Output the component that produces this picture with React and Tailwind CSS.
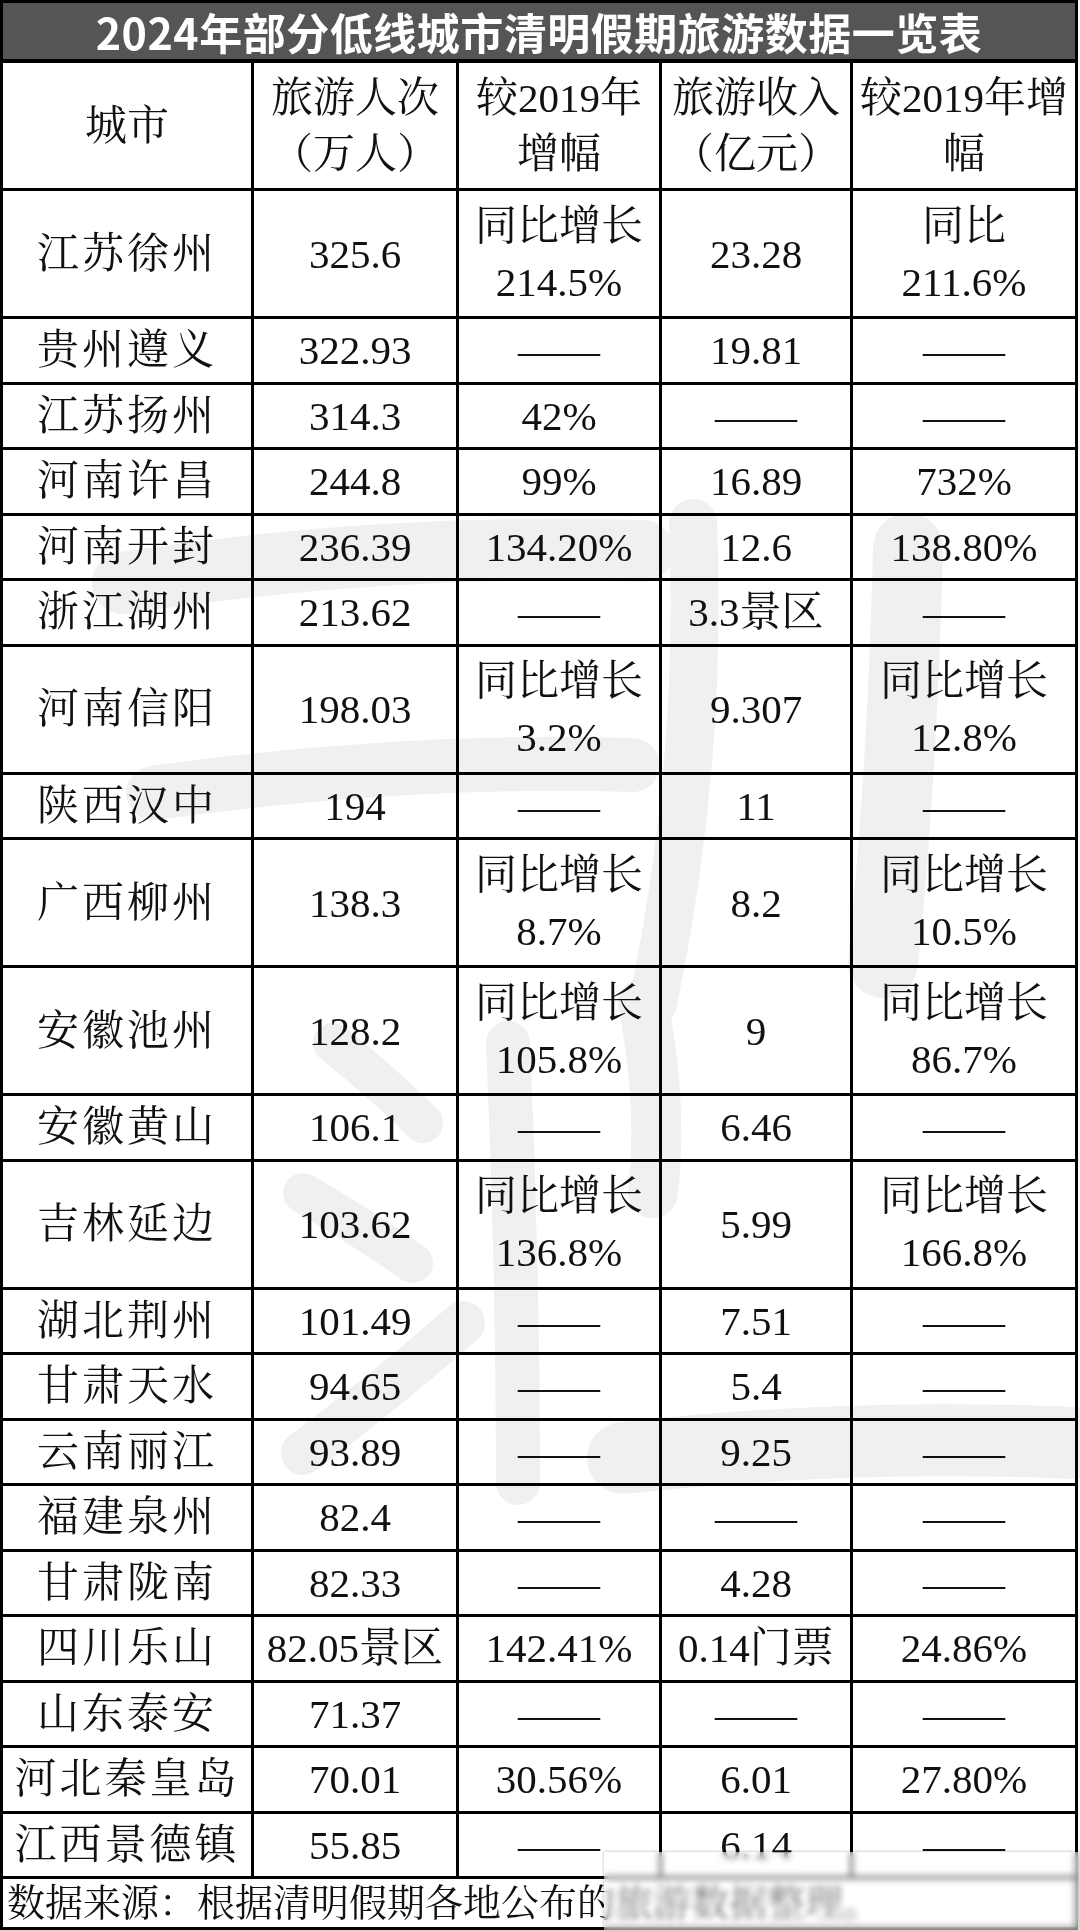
import React from "react";

const rows = [
  ["江苏徐州", "325.6", "同比增长\n214.5%", "23.28", "同比\n211.6%", true],
  ["贵州遵义", "322.93", "——", "19.81", "——"],
  ["江苏扬州", "314.3", "42%", "——", "——"],
  ["河南许昌", "244.8", "99%", "16.89", "732%"],
  ["河南开封", "236.39", "134.20%", "12.6", "138.80%"],
  ["浙江湖州", "213.62", "——", "3.3景区", "——"],
  ["河南信阳", "198.03", "同比增长\n3.2%", "9.307", "同比增长\n12.8%", true],
  ["陕西汉中", "194", "——", "11", "——"],
  ["广西柳州", "138.3", "同比增长\n8.7%", "8.2", "同比增长\n10.5%", true],
  ["安徽池州", "128.2", "同比增长\n105.8%", "9", "同比增长\n86.7%", true],
  ["安徽黄山", "106.1", "——", "6.46", "——"],
  ["吉林延边", "103.62", "同比增长\n136.8%", "5.99", "同比增长\n166.8%", true],
  ["湖北荆州", "101.49", "——", "7.51", "——"],
  ["甘肃天水", "94.65", "——", "5.4", "——"],
  ["云南丽江", "93.89", "——", "9.25", "——"],
  ["福建泉州", "82.4", "——", "——", "——"],
  ["甘肃陇南", "82.33", "——", "4.28", "——"],
  ["四川乐山", "82.05景区", "142.41%", "0.14门票", "24.86%"],
  ["山东泰安", "71.37", "——", "——", "——"],
  ["河北秦皇岛", "70.01", "30.56%", "6.01", "27.80%"],
  ["江西景德镇", "55.85", "——", "6.14", "——"],
];

// split a line into runs: CJK runs get a slightly larger size
function Runs({ text, city }) {
  const parts = text.match(/[\u3000-\u9fff\uff00-\uffef]+|[^\u3000-\u9fff\uff00-\uffef]+/g) || [];
  return parts.map((p, i) =>
    /[\u3000-\u9fff\uff00-\uffef]/.test(p) ? (
      <span
        key={i}
        className={city ? "text-[42px] tracking-[3px]" : "text-[42px]"}
      >
        {p}
      </span>
    ) : (
      <span key={i} className="text-[41px]">
        {p}
      </span>
    )
  );
}

function Cell({ text, last, city }) {
  const lines = text.split("\n");
  return (
    <div
      className={
        last
          ? "flex flex-col items-center justify-center text-center leading-[56px]"
          : "flex flex-col items-center justify-center text-center leading-[56px] border-r-[3px] border-black"
      }
    >
      {lines.map((l, i) => (
        <div key={i} className="whitespace-nowrap">
          <Runs text={l} city={city} />
        </div>
      ))}
    </div>
  );
}

function Row({ cells, tall }) {
  return (
    <div
      className={
        tall
          ? "grid grid-cols-[251px_205px_203px_191px_1fr] h-[128px] border-b-[3px] border-black"
          : "grid grid-cols-[251px_205px_203px_191px_1fr] h-[65.5px] border-b-[3px] border-black"
      }
    >
      {cells.map((c, i) => (
        <Cell key={i} text={c} last={i === 4} city={i === 0} />
      ))}
    </div>
  );
}

function Watermark() {
  return (
    <svg
      className="absolute left-0 top-0 pointer-events-none mix-blend-multiply"
      width="1080"
      height="1930"
      viewBox="0 0 1080 1930"
    >
      <g stroke="#f0f0f0" strokeLinecap="round" fill="none">
        <path d="M120 580 Q380 540 640 548" strokeWidth="62" />
        <path d="M150 790 Q400 755 630 762" strokeWidth="54" />
        <path d="M690 520 Q700 760 650 1000" strokeWidth="48" />
        <path d="M905 545 Q900 760 880 960" strokeWidth="70" />
        <path d="M330 1040 Q380 1080 420 1120" strokeWidth="40" />
        <path d="M300 1190 Q360 1225 410 1260" strokeWidth="40" />
        <path d="M300 1450 Q380 1390 460 1320" strokeWidth="44" />
        <path d="M505 1040 Q515 1260 515 1480" strokeWidth="44" />
        <path d="M640 1000 Q660 1100 650 1190" strokeWidth="50" />
        <path d="M620 1455 Q850 1430 1070 1440" strokeWidth="72" />
      </g>
    </svg>
  );
}

export default function App() {
  const serif =
    "font-['Liberation_Serif','Noto_Serif_CJK_SC','Noto_Sans_CJK_SC',serif]";
  return (
    <div className="relative w-[1080px] h-[1930px] bg-white overflow-hidden">
      <div
        className={
          "relative w-[1078px] h-[1930px] border-[3px] border-black flex flex-col text-[41px] text-[#111] " +
          serif
        }
      >
        <div className="h-[60px] shrink-0 bg-[#555555] border-b-[4px] border-black flex items-center justify-center text-white font-bold text-[43px] leading-none font-['Noto_Sans_CJK_SC','Noto_Sans',sans-serif] tracking-[0.5px]">
          2024年部分低线城市清明假期旅游数据一览表
        </div>
        <div className="grid grid-cols-[251px_205px_203px_191px_1fr] h-[128px] shrink-0 border-b-[3px] border-black">
          <Cell text="城市" />
          <Cell text={"旅游人次\n（万人）"} />
          <Cell text={"较2019年\n增幅"} />
          <Cell text={"旅游收入\n（亿元）"} />
          <Cell text={"较2019年增\n幅"} last />
        </div>
        {rows.map((r, i) => (
          <Row key={i} cells={r.slice(0, 5)} tall={!!r[5]} />
        ))}
        <div className="flex-1 flex items-center pl-[4px] leading-none whitespace-nowrap text-[38px]">
          数据来源：根据清明假期各地公布的旅游数据整理。
        </div>
        <Watermark />
      </div>
      <div className="absolute left-[604px] top-[1852px] right-0 bottom-0 backdrop-blur-[3px] bg-white/40 shadow-[0_0_3px_rgba(0,0,0,0.3)]" />
    </div>
  );
}
